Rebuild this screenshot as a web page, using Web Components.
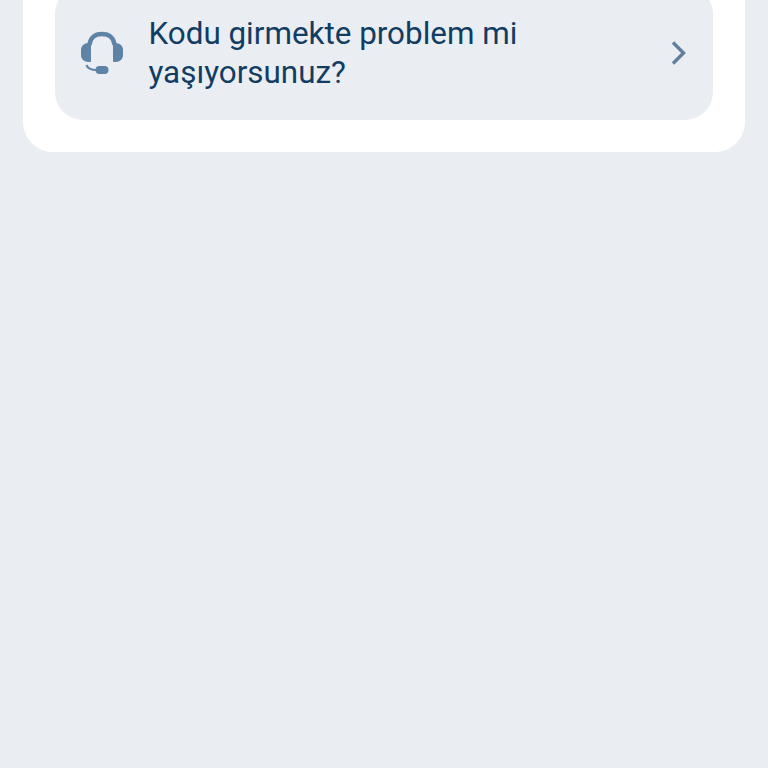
<!DOCTYPE html>
<html lang="tr">
<head>
<meta charset="utf-8">
<title>Kod</title>
<style>
    html, body {
        margin: 0;
        height: 768px;
        overflow: hidden;
        background: #eaeef3;
    }
</style>
</head>
<body>
<help-card>
    <help-row>Kodu girmekte problem mi yaşıyorsunuz?</help-row>
</help-card>

<script>
class HelpCard extends HTMLElement {
    constructor() {
        super();
        const shadow = this.attachShadow({mode: "open"});
        shadow.innerHTML = `
            <style>
                :host {
                    display: block;
                    margin: -45px 23px 0 23px;
                    padding: 31px 32px 31.500px 32px;
                    background: #ffffff;
                    border-radius: 30px;
                }
            </style>
            <slot></slot>
        `;
    }
}

class HelpRow extends HTMLElement {
    constructor() {
        super();
        const shadow = this.attachShadow({mode: "open"});
        shadow.innerHTML = `
            <style>
                :host {
                    display: flex;
                    align-items: center;
                    height: 134px;
                    padding: 0 24px 0 24px;
                    background: #eaeef3;
                    border-radius: 28px;
                    font-family: Roboto, sans-serif;
                    font-size: 31.400px;
                    line-height: 39px;
                    color: #123d63;
                }
                .icon {
                    flex: none;
                    width: 46px;
                    height: 46px;
                    margin-right: 24px;
                }
                .text {
                    flex: 1;
                    max-width: 400px;
                    margin-left: -0.500px;
                }
                .chevron {
                    flex: none;
                    width: 20px;
                    height: 28px;
                    margin-left: auto;
                }
            </style>
            <svg class="icon" viewBox="0 0 46 46" fill="none">
                <path d="M10.500 15C11 8 15.500 4 23 4S35 8 35.500 15" stroke="#5d83a6" stroke-width="4.400"/>
                <path d="M12 14V31C12 31.600 11.600 32 11 32H9.500C5 32 2 29 2 25V20C2 16 5 13 9.500 13H11C11.600 13 12 13.400 12 14Z" fill="#5d83a6"/>
                <path d="M34 14V31C34 31.600 34.400 32 35 32H36.500C41 32 44 29 44 25V20C44 16 41 13 36.500 13H35C34.400 13 34 13.400 34 14Z" fill="#5d83a6"/>
                <path d="M7.500 35C8.500 38.500 11 40 18 40" stroke="#5d83a6" stroke-width="2.200"/>
                <rect x="16.500" y="36" width="13" height="8" rx="4" fill="#5d83a6"/>
            </svg>
            <span class="text"><slot></slot></span>
            <svg class="chevron" viewBox="0 0 20 28" fill="none">
                <path d="M4 3.500L14.500 14L4 24.500" stroke="#5f7f9c" stroke-width="3.400"/>
            </svg>
        `;
    }
}

window.customElements.define("help-card", HelpCard);
window.customElements.define("help-row", HelpRow);
</script>
</body>
</html>
